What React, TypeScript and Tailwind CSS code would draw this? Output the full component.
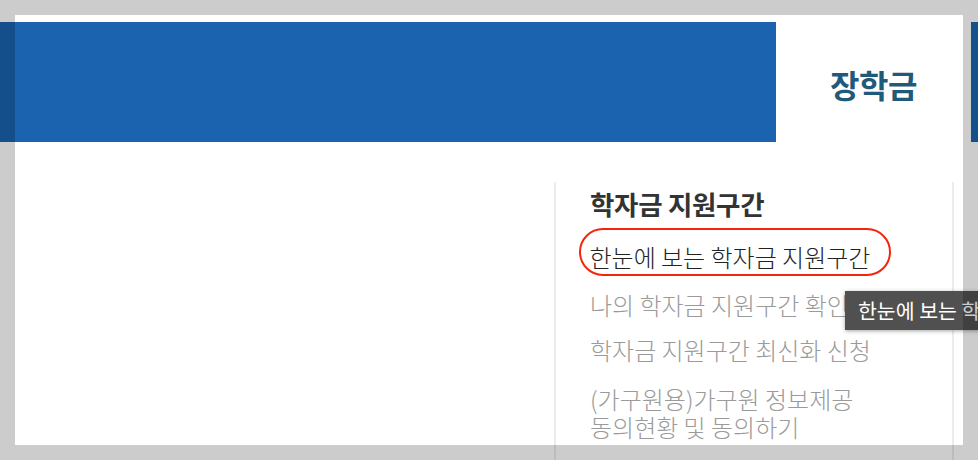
import React from "react";

const KR = "font-['Noto_Sans_CJK_KR','Noto_Sans',sans-serif]";

const items = [
  { label: "나의 학자금 지원구간 확인" },
  { label: "학자금 지원구간 최신화 신청" },
  { label: "(가구원용)가구원 정보제공\n동의현황 및 동의하기" },
];

function Tooltip() {
  return (
    <div className="absolute left-[845px] top-[291px] flex h-[39px] w-[300px] items-center bg-[#505050] pl-[13px] shadow-[0_1px_4px_rgba(0,0,0,0.35)]">
      <span className="whitespace-nowrap text-[20.5px] leading-none text-white">
        한눈에 보는 학자금
      </span>
    </div>
  );
}

export default function App() {
  return (
    <div className={`relative h-[460px] w-[978px] overflow-hidden bg-white ${KR}`}>
      {/* page under the dim overlay */}
      <div className="flex pt-[22px]">
        <div className="h-[120px] w-[776px] bg-[#1b63ae]" />
        <div className="flex h-[120px] w-[195px] items-center justify-center pt-[3px]">
          <span className="text-[32px] font-bold tracking-[-0.5px] text-[#1f5a7a]">
            장학금
          </span>
        </div>
        <div className="h-[120px] flex-1 bg-[#1b63ae]" />
      </div>

      <div className="flex">
        <div className="w-[554px]" />
        <div className="mt-[40px] h-[300px] w-[400px] border-x-2 border-[#ececec] pl-[34px] pt-[6px]">
          <h3 className="text-[26.5px] font-bold leading-[32px] tracking-[-0.3px] text-[#333]">
            학자금 지원구간
          </h3>
          <ul className="mt-[6px] flex flex-col gap-[17px]">
            <li className="-mb-[2px] -ml-[11px] mt-[2px]">
              <span className="inline-block rounded-[24px] border-[2.5px] border-[#f5240a] pb-[3px] pl-[8.5px] pr-[19px] pt-[13px] text-[24px] font-light leading-[28px] text-[#222]">
                한눈에 보는 학자금 지원구간
              </span>
            </li>
            {items.map((it, i) => (
              <li
                key={it.label}
                className={`whitespace-pre-line text-[24px] font-light leading-[28px] text-[#9a9a9a] ${
                  i === items.length - 1 ? "mt-[4px]" : ""
                }`}
              >
                {it.label}
              </li>
            ))}
          </ul>
        </div>
      </div>

      <Tooltip />

      {/* spotlight: dims everything outside the captured panel */}
      <div className="pointer-events-none absolute left-[15px] top-[15px] h-[430px] w-[948px] shadow-[0_0_0_2000px_rgba(0,0,0,0.2)]" />
    </div>
  );
}
